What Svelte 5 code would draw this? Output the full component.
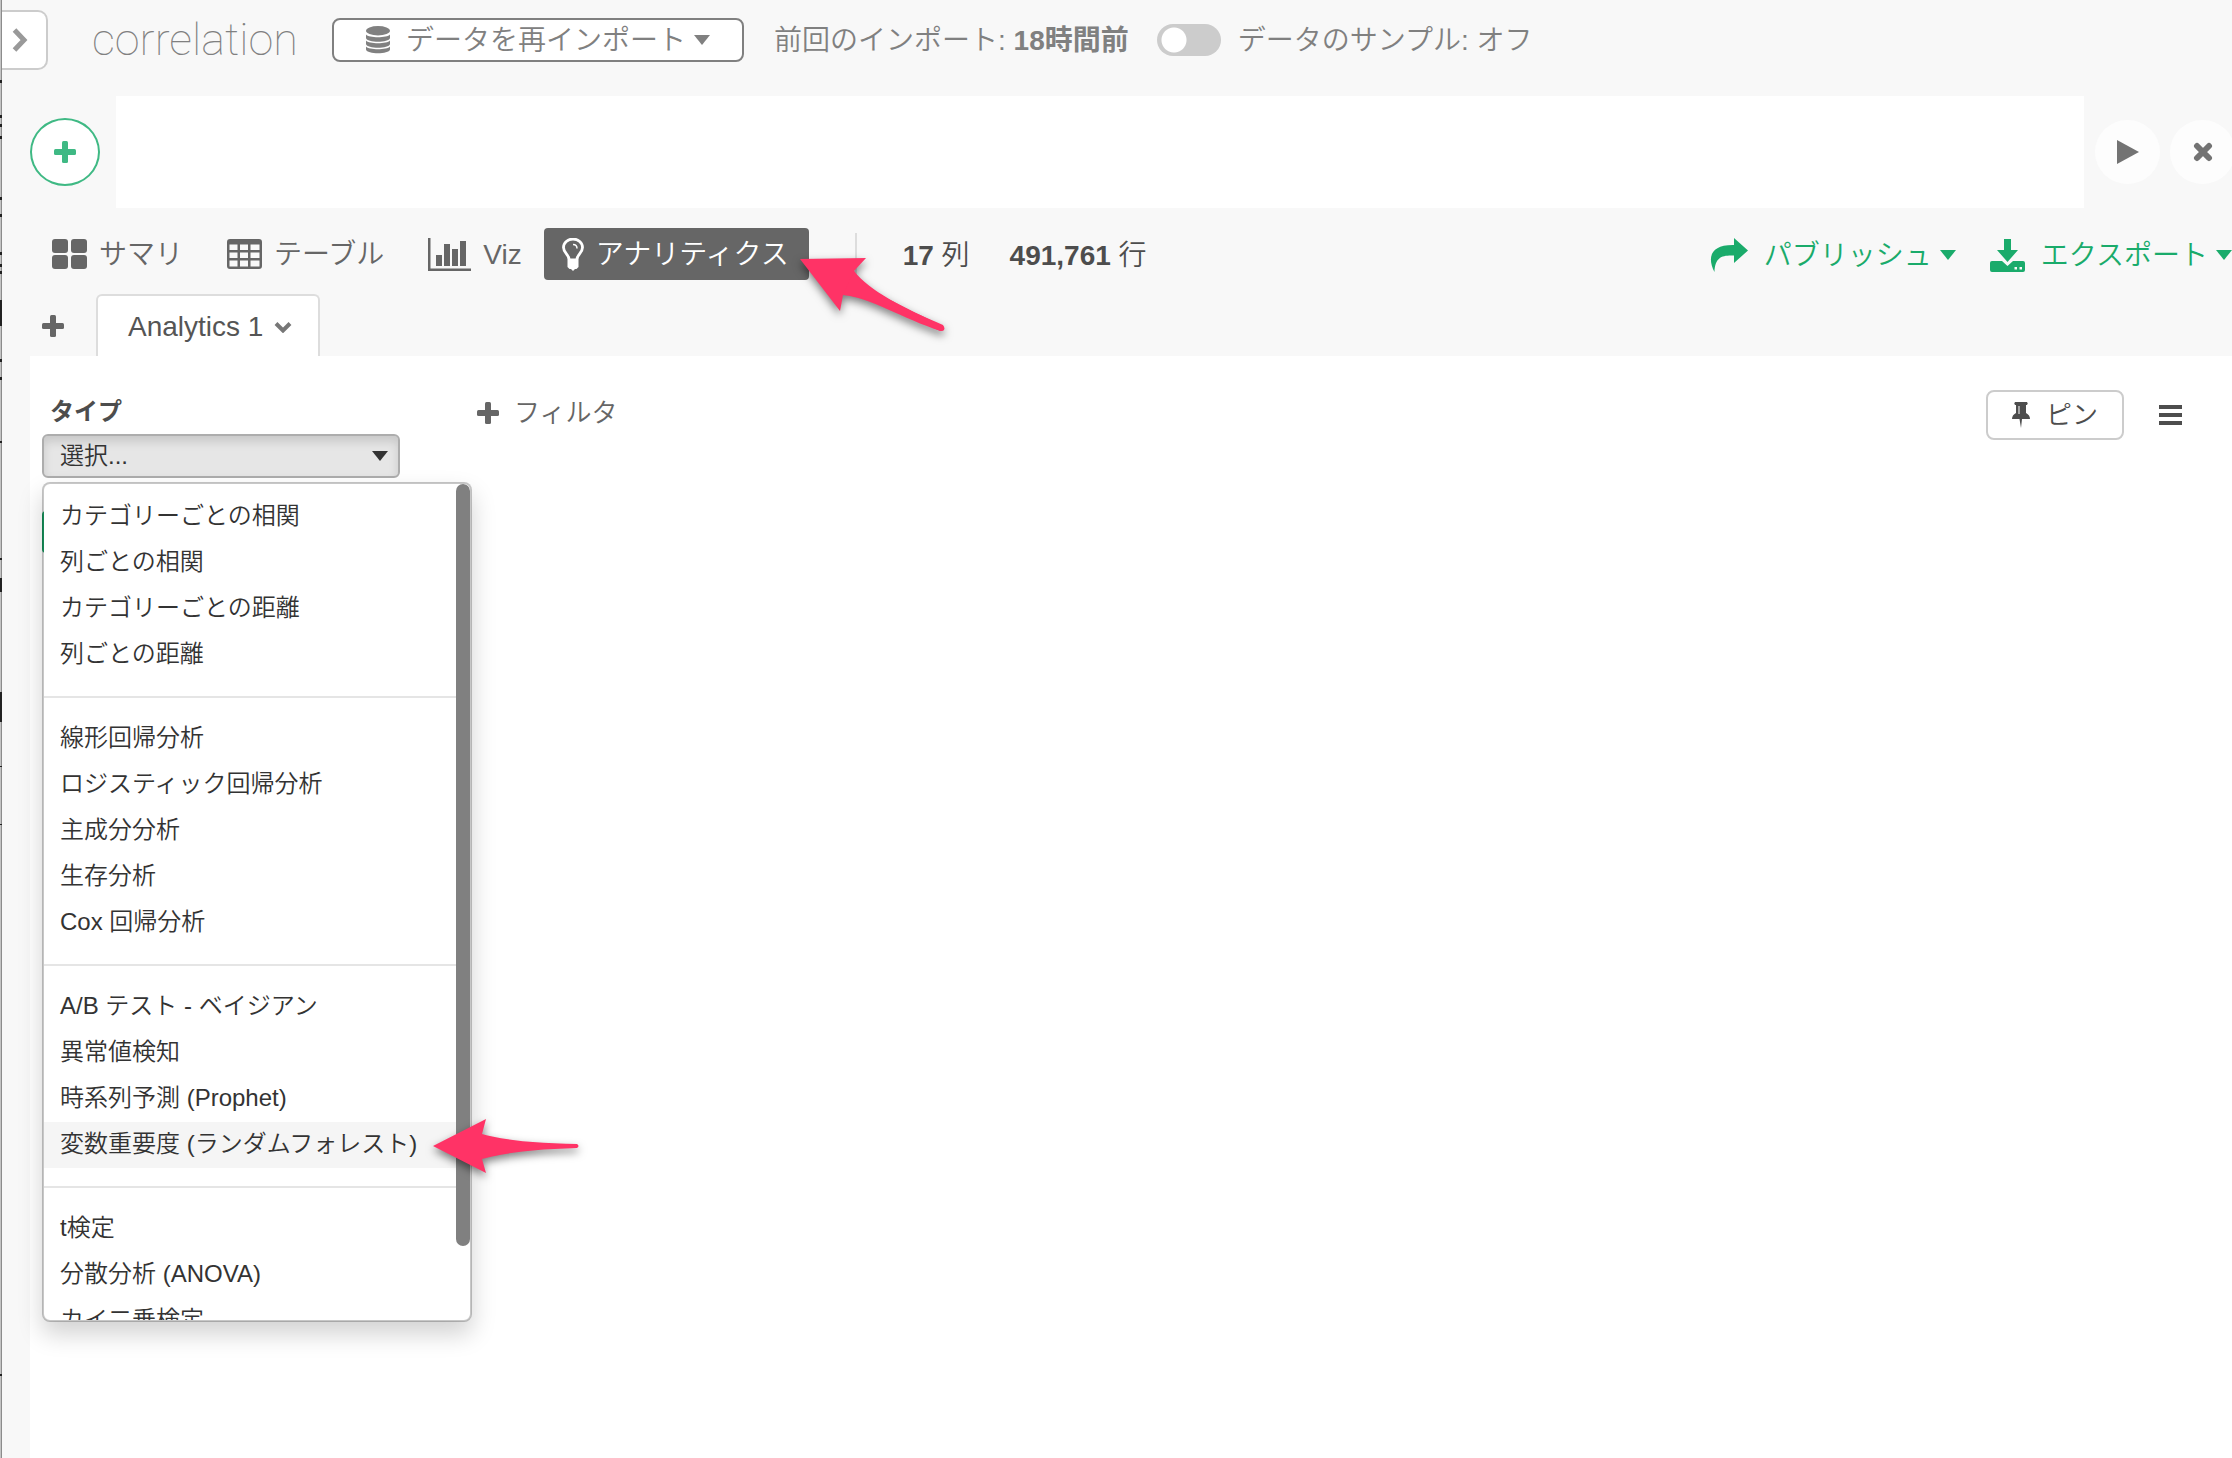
<script>
  const groups = [
    ['カテゴリーごとの相関', '列ごとの相関', 'カテゴリーごとの距離', '列ごとの距離'],
    ['線形回帰分析', 'ロジスティック回帰分析', '主成分分析', '生存分析', 'Cox 回帰分析'],
    ['A/B テスト - ベイジアン', '異常値検知', '時系列予測 (Prophet)', '変数重要度 (ランダムフォレスト)'],
    ['t検定', '分散分析 (ANOVA)', 'カイ二乗検定']
  ];
  const highlighted = '変数重要度 (ランダムフォレスト)';
  // Slivers of the window behind, visible along the left edge: [top, height]
  const slivers = [[80, 3], [115, 3], [124, 3], [136, 3], [197, 3], [214, 3], [252, 3], [264, 3], [271, 3], [300, 26], [359, 3], [377, 3], [441, 2], [558, 2], [578, 14], [692, 30], [766, 1], [824, 1], [1374, 2]];
</script>

{#snippet plus()}
  <svg class="plus" viewBox="0 0 22 22" aria-hidden="true"><rect x="8" y="0" width="6" height="22" rx="1.5" /><rect x="0" y="8" width="22" height="6" rx="1.5" /></svg>
{/snippet}

{#snippet caret()}
  <svg class="caret" viewBox="0 0 16 10" aria-hidden="true"><path d="M0 0h16L8 10z" /></svg>
{/snippet}

<div class="app">
  <svg class="edge" aria-hidden="true">
    {#each slivers as [y, h]}<rect x="0" {y} width="2" height={h} />{/each}
  </svg>

  <header class="top">
    <button class="expand" aria-label="開く">
      <svg viewBox="0 0 16 24"><path d="M2.5 2 L12 12 L2.5 22" fill="none" stroke="#999" stroke-width="5" /></svg>
    </button>
    <h1>correlation</h1>
    <button class="import">
      <svg class="db" viewBox="0 0 24 28">
        <ellipse cx="12" cy="4.7" rx="12" ry="4.7" />
        <path d="M0 8.5c3 3.600 21 3.600 24 0v3.600c-1 5-23 5-24 0z" />
        <path d="M0 14.500c3 3.600 21 3.600 24 0v3.600c-1 5-23 5-24 0z" />
        <path d="M0 20.500c3 3.600 21 3.600 24 0v3c-1 5-23 5-24 0z" />
      </svg>
      <span>データを再インポート</span>
      {@render caret()}
    </button>
    <p>前回のインポート: <b>18時間前</b></p>
    <label class="sample"><input type="checkbox" role="switch" /><span>データのサンプル: オフ</span></label>
  </header>

  <section class="formula">
    <button class="add" aria-label="ステップを追加">{@render plus()}</button>
    <input class="command" type="text" aria-label="コマンド" />
    <button class="round" aria-label="実行"><svg width="22" height="24" viewBox="0 0 22 24"><path d="M0 0L22 12L0 24z" /></svg></button>
    <button class="round" aria-label="閉じる"><svg width="20" height="20" viewBox="0 0 20 20"><path d="M4 4L16 16M16 4L4 16" stroke="#737373" stroke-width="6" stroke-linecap="round" /></svg></button>
  </section>

  <nav class="views">
    <button class="view">
      <svg width="35" height="30" viewBox="0 0 35 30"><rect width="16" height="14" rx="3" /><rect x="19" width="16" height="14" rx="3" /><rect y="16" width="16" height="14" rx="3" /><rect x="19" y="16" width="16" height="14" rx="3" /></svg>
      <span>サマリ</span>
    </button>
    <button class="view">
      <svg width="35" height="30" viewBox="0 0 35 30"><path fill-rule="evenodd" d="M3 0h29a3 3 0 0 1 3 3v24a3 3 0 0 1-3 3H3a3 3 0 0 1-3-3V3a3 3 0 0 1 3-3zM2.500 5.500v5.500h8v-5.500zM13 5.500v5.500h8v-5.500zM23.500 5.500v5.500h9v-5.500zM2.500 13.500v5.500h8v-5.500zM13 13.500v5.500h8v-5.500zM23.500 13.500v5.500h9v-5.500zM2.500 21.500v6h8v-6zM13 21.500v6h8v-6zM23.500 21.500v6h9v-6z" /></svg>
      <span>テーブル</span>
    </button>
    <button class="view viz">
      <svg width="43" height="33" viewBox="0 0 43 33"><path d="M0 0h2.500v30.500H43V33H0z" /><path d="M8 17h6v11H8zM16 6h6v22h-6zM24 11h6v17h-6zM32 3h6v25h-6z" /></svg>
      <span>Viz</span>
    </button>
    <button class="view active">
      <svg width="22" height="33" viewBox="0 0 22 33"><path d="M7 21c0-4-5.500-6-5.500-11.500a9.500 8.500 0 0 1 19 0C20.500 15 15 17 15 21" fill="none" stroke="#fff" stroke-width="2.800" /><path d="M5.500 20.500h11v8.500l-2 2h-1.500l-2 2-2-2h-1.500l-2-2z" /><path d="M11 6.500q4 0 4 4" fill="none" stroke="#fff" stroke-width="1.500" /></svg>
      <span>アナリティクス</span>
    </button>
    <div class="counts"><span><b>17</b> 列</span><span><b>491,761</b> 行</span></div>
    <div class="actions">
      <button>
        <svg width="38" height="34" viewBox="0 0 38 34"><path d="M24 0L38 12.500L24 25V17.500C12 17 5 19 4.500 34C-2 22 -2 6.500 24 7z" /></svg>
        <span>パブリッシュ</span>{@render caret()}
      </button>
      <button>
        <svg width="35" height="33" viewBox="0 0 35 33"><path d="M14 0h7v11h7L17.500 23 7 11h7z" /><path fill-rule="evenodd" d="M2 22h10l5.500 5 5.500-5h10a2 2 0 0 1 2 2v7a2 2 0 0 1-2 2H2a2 2 0 0 1-2-2v-7a2 2 0 0 1 2-2zM24.500 28v2.500h2.500v-2.500zM29.500 28v2.500h2.500v-2.500z" /></svg>
        <span>エクスポート</span>{@render caret()}
      </button>
    </div>
  </nav>

  <div class="tabs">
    <button class="newtab" aria-label="タブを追加">{@render plus()}</button>
    <button class="tab">Analytics 1 <svg width="18" height="12" viewBox="0 0 18 12"><path d="M2 2.500L9 9.500L16 2.500" fill="none" stroke="#777" stroke-width="4" /></svg></button>
  </div>

  <main>
    <div class="type">
      <span class="label" id="type-label">タイプ</span>
      <button class="picker" aria-labelledby="type-label" aria-expanded="true">選択...{@render caret()}</button>
      <button class="run" aria-label="分析を実行"></button>
      <div class="menu" role="listbox" aria-labelledby="type-label">
        {#each groups as group}
          <ul>
            {#each group as item}
              <li role="option" aria-selected={item === highlighted} class:hot={item === highlighted}>{item}</li>
            {/each}
          </ul>
        {/each}
        <div class="thumb"></div>
      </div>
    </div>
    <button class="filter">{@render plus()}フィルタ</button>
    <button class="pin">
      <svg width="18" height="26" viewBox="0 0 18 26"><path fill-rule="evenodd" d="M3 0h12q1.500 1.500 0 3h-1v8q4 2 4 6h-8L9 26 7.500 17H0q0-4 4-6V3H3q-1.500-1.500 0-3zM6.500 4v8h1V4z" /></svg>
      ピン
    </button>
    <button class="burger" aria-label="メニュー"><svg width="23" height="20" viewBox="0 0 23 20"><path d="M0 0h23v4H0zM0 8h23v4H0zM0 16h23v4H0z" /></svg></button>
  </main>

  <svg class="arrow one" viewBox="0 0 160 90" aria-hidden="true"><path d="M3 6L69 5L57 18C72 38 106 54 146 73Q149 78 144 78C106 66 72 44 46 42L43 58z" /><path d="M57 18C68 36 100 52 146 72Q150 78 143 78C112 64 78 44 46 42z" /></svg>
  <svg class="arrow two" viewBox="0 0 160 70" aria-hidden="true"><path d="M3 32L56 5L52 20C76 27 110 29 147 30Q150 32 147 34C110 35 76 38 52 45L56 59z" /></svg>
</div>

<style>
  :global(body) { background: #f8f8f8; }
  .app {
    position: relative;
    display: flex;
    flex-direction: column;
    min-height: 100vh;
    overflow: hidden;
    color: #666;
    font: 28px/40px "Liberation Sans", "Noto Sans CJK JP", sans-serif;
    font-weight: 350;
  }
  button, input { font: inherit; color: inherit; margin: 0; padding: 0; border: 0; background: none; box-sizing: border-box; }
  button { display: flex; align-items: center; white-space: nowrap; flex: none; }
  svg { fill: currentColor; flex: none; display: block; }
  p, h1, ul { margin: 0; padding: 0; list-style: none; }
  .plus { width: 22px; height: 22px; }
  .caret { width: 16px; height: 10px; }
  .edge { position: absolute; left: 0; top: 0; width: 2px; height: 100%; background: linear-gradient(90deg, #c4c4c4 50%, #8c8c8c 50%); fill: #222; z-index: 1; }

  .top { display: flex; align-items: center; height: 80px; color: #808080; }
  .expand { width: 48px; height: 60px; background: #fff; border: 2px solid #ccc; border-left: 0; border-radius: 0 10px 10px 0; padding-left: 12px; }
  .expand svg { width: 16px; height: 24px; }
  h1 { font: 100 45px/56px Roboto, sans-serif; margin: 0 36px 0 44px; width: 204px; white-space: nowrap; }
  .import { width: 412px; height: 44px; border: 2px solid #808080; border-radius: 8px; background: #fff; padding-left: 32px; }
  .db { width: 24px; height: 28px; margin-right: 16px; }
  .import .caret { margin-left: 8px; }
  .top p { margin: 0 28px 0 30px; white-space: nowrap; }
  .top p, .top span, .views span { line-height: 38px; padding-top: 2px; }
  b { font-weight: 700; }
  .sample { display: flex; align-items: center; gap: 17px; white-space: nowrap; }
  .sample input { appearance: none; width: 64px; height: 32px; border-radius: 16px; background: radial-gradient(circle at 17px 16px, #fff 12px, #ccc 13px); }

  .formula { display: flex; align-items: center; margin-top: 16px; height: 112px; padding-left: 30px; }
  .add { width: 70px; height: 68px; border: 2px solid #3fb984; border-radius: 50%; background: #fff; color: #3fb984; justify-content: center; margin-right: 16px; }
  .command { flex: 1; min-width: 0; height: 112px; background: #fff; margin-right: 11px; }
  .round { width: 65px; height: 64px; border-radius: 50%; background: #fdfdfd; color: #737373; justify-content: center; margin-right: 10px; }
  .round:last-child { margin-right: -3px; }

  .views { display: flex; align-items: center; margin-top: 20px; height: 52px; padding-left: 40px; }
  .view { height: 52px; padding: 0 12px; gap: 12px; margin-right: 20px; }
  .viz { margin-right: 10px; }
  .active { background: #666; color: #fff; border-radius: 4px; padding: 0 20px 0 18px; margin-right: 46px; }
  .counts { display: flex; gap: 40px; color: #4d4d4d; border-left: 2px solid #ddd; padding-left: 46px; white-space: nowrap; }
  .counts { padding-top: 2px; }
  .actions { display: flex; margin-left: auto; gap: 34px; padding-top: 2px; color: #1aab6b; }
  .actions span { margin: 0 8px 0 16px; }

  .tabs { display: flex; align-items: center; margin-top: 14px; height: 62px; padding-left: 42px; }
  .newtab { padding-top: 2px; }
  .tab { align-self: stretch; margin-left: 32px; padding: 2px 26px 0 30px; gap: 11px; background: #fff; border: 2px solid #ddd; border-bottom: 0; border-radius: 6px 6px 0 0; color: #555; }

  main { flex: 1; display: flex; align-items: flex-start; margin-left: 30px; padding: 34px 50px 0 12px; background: #fff; color: #4d4d4d; }
  .type { position: relative; width: 430px; font-size: 24px; }
  .label { display: block; box-sizing: border-box; padding: 2px 0 0 8px; height: 44px; font-weight: 700; }
  .picker { width: 358px; height: 44px; padding: 0 10px 0 16px; justify-content: space-between; border: 2px solid #adadad; border-radius: 6px; background: #e6e6e6; box-shadow: inset 0 6px 10px rgba(0, 0, 0, 0.125); color: #333; }
  .run { width: 60px; height: 42px; margin-top: 33px; background: #1aab6b; border-radius: 4px; }
  .menu { position: absolute; left: 0; top: 92px; width: 430px; height: 840px; overflow: hidden; box-sizing: border-box; padding: 10px 14px 0 0; border: 2px solid rgba(0, 0, 0, 0.22); border-radius: 8px; background: #fff; background-clip: padding-box; color: #333; box-shadow: 0 12px 24px rgba(0, 0, 0, 0.18); line-height: 44px; }
  ul + ul { border-top: 2px solid #e5e5e5; margin-top: 18px; padding-top: 18px; }
  li { height: 46px; padding-left: 16px; white-space: nowrap; }
  .hot { background: #f5f5f5; }
  .thumb { position: absolute; right: 0; top: 0; width: 14px; height: 762px; border-radius: 7px; background: #808080; }
  .filter { margin-left: 5px; padding-top: 3px; gap: 15px; font-size: 26px; color: #666; }
  .pin { width: 138px; height: 50px; margin-left: auto; border: 2px solid #ccc; border-radius: 8px; justify-content: center; gap: 16px; font-size: 26px; background: #fff; }
  .burger { height: 50px; margin-left: 35px; }

  .arrow { position: absolute; fill: #ff3366; filter: drop-shadow(0 4px 4px rgba(0, 0, 0, 0.5)); overflow: visible; }
  .one { left: 797px; top: 253px; width: 160px; height: 90px; }
  .two { left: 430px; top: 1114px; width: 160px; height: 70px; }
</style>
